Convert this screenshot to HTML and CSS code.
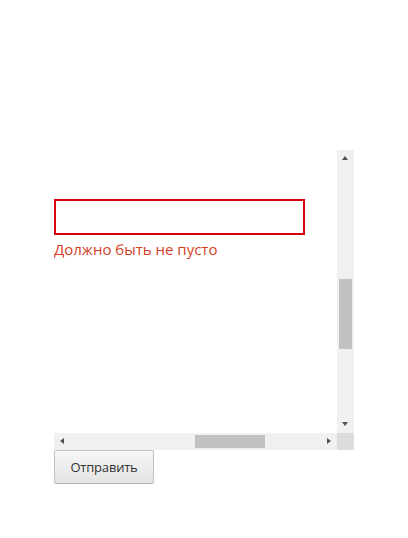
FILE: index.html
```html
<!DOCTYPE html>
<html lang="ru">
<head>
<meta charset="utf-8">
<link rel="stylesheet" href="styles.css">
</head>
<body>
<div class="page">
  <div class="scrollbox">
    <div class="viewport">
      <div class="field">
        <input class="input invalid" type="text">
        <div class="error">Должно быть не пусто</div>
      </div>
    </div>
    <div class="vbar">
      <div class="arrow up"></div>
      <div class="vtrack"><div class="vthumb"></div></div>
      <div class="arrow down"></div>
    </div>
    <div class="hbar">
      <div class="arrow left"></div>
      <div class="htrack"><div class="hthumb"></div></div>
      <div class="arrow right"></div>
    </div>
    <div class="corner"></div>
  </div>
  <button class="btn" type="button">Отправить</button>
</div>
</body>
</html>
```

FILE: styles.css
```css
html, body {
  margin: 0;
  padding: 0;
  background: #ffffff;
}
body {
  font-family: "Open Sans", "Noto Sans", "DejaVu Sans", sans-serif;
}
.page {
  padding: 150px 0 0 54px;
  display: flex;
  flex-direction: column;
  align-items: flex-start;
}
.scrollbox {
  width: 300px;
  height: 300px;
  display: grid;
  grid-template-columns: 283px 17px;
  grid-template-rows: 283px 17px;
}
.viewport {
  overflow: hidden;
  background: #fff;
}
.field {
  padding-top: 49px;
  display: flex;
  flex-direction: column;
}
.input {
  box-sizing: border-box;
  width: 251px;
  height: 36px;
  margin: 0;
  padding: 0 8px;
  border: 2px solid #d9000d;
  background: #fff;
  outline: none;
  font: inherit;
}
.error {
  margin-top: 4px;
  font-size: 15px;
  line-height: 20px;
  color: #d2401f;
}
.vbar {
  background: #f0f0f0;
  display: flex;
  flex-direction: column;
  align-items: center;
}
.hbar {
  background: #f0f0f0;
  display: flex;
  flex-direction: row;
  align-items: center;
}
.corner {
  background: #dcdcdc;
}
.vtrack {
  flex: 1;
  width: 100%;
  padding-top: 112px;
  box-sizing: border-box;
}
.vthumb {
  margin: 0 2px;
  height: 70px;
  background: #c1c1c1;
}
.htrack {
  flex: 1;
  height: 100%;
  padding: 2px 0 2px 124px;
  box-sizing: border-box;
}
.hthumb {
  width: 70px;
  height: 13px;
  background: #c1c1c1;
}
.arrow {
  width: 17px;
  height: 17px;
  flex: none;
  position: relative;
}
.arrow::after {
  content: "";
  position: absolute;
  width: 0;
  height: 0;
}
.arrow.up::after {
  left: 5px;
  top: 6px;
  border-left: 3.5px solid transparent;
  border-right: 3.5px solid transparent;
  border-bottom: 4px solid #505050;
}
.arrow.down::after {
  left: 5px;
  top: 6px;
  border-left: 3.5px solid transparent;
  border-right: 3.5px solid transparent;
  border-top: 4px solid #505050;
}
.arrow.left::after {
  left: 6px;
  top: 5px;
  border-top: 3.5px solid transparent;
  border-bottom: 3.5px solid transparent;
  border-right: 4px solid #505050;
}
.arrow.right::after {
  left: 7px;
  top: 5px;
  border-top: 3.5px solid transparent;
  border-bottom: 3.5px solid transparent;
  border-left: 4px solid #505050;
}
.btn {
  box-sizing: border-box;
  width: 100px;
  height: 34px;
  margin: 0;
  padding: 0;
  border: 1px solid #c3c3c3;
  border-bottom-color: #b0b0b0;
  border-radius: 2px;
  background: linear-gradient(#f6f6f6, #e4e4e4);
  font-family: "Open Sans", "Noto Sans", sans-serif;
  font-size: 13px;
  letter-spacing: -0.2px;
  color: #333;
}
```
